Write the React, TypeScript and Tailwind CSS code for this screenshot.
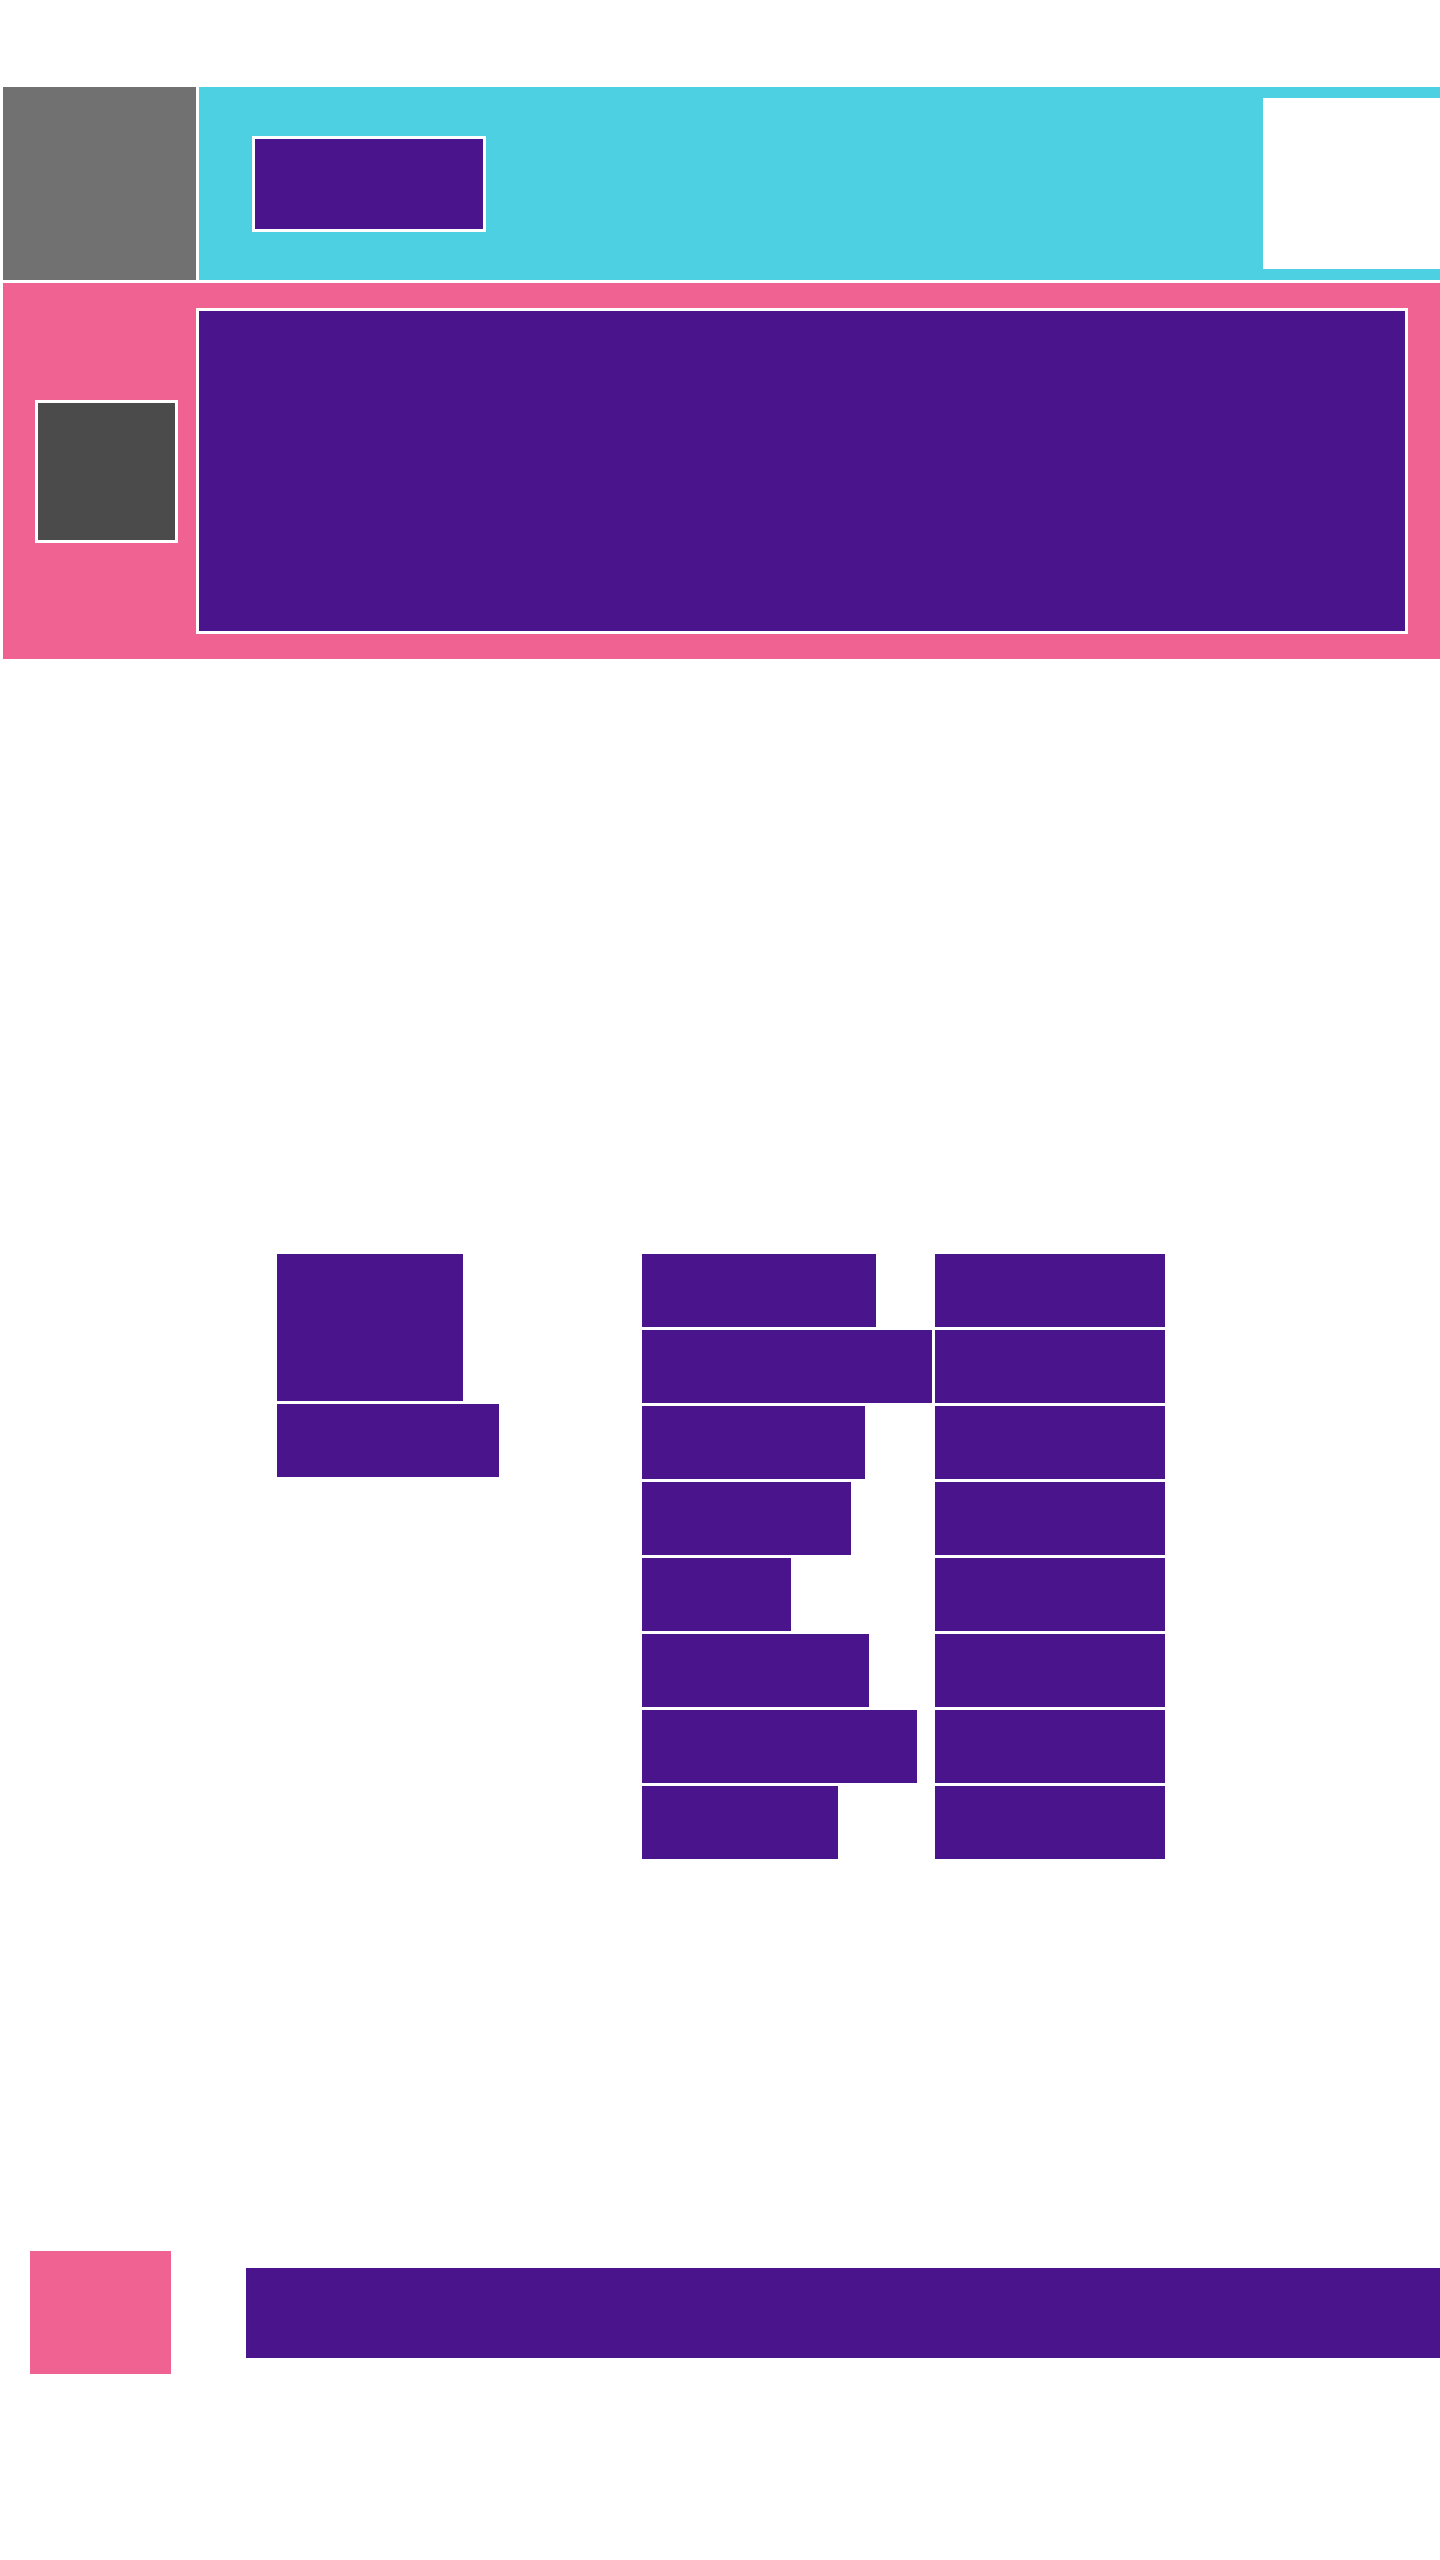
const leftBars = [234, 290, 223, 209, 149, 227, 275, 196];

function Bar({ width }: { width: number }) {
  return <div className="h-[73px] bg-[#4a148c]" style={{ width }} />;
}

export default function App() {
  return (
    <div className="min-h-[2560px] w-full bg-white">
      {/* top bands */}
      <div className="flex flex-col gap-[3px] pl-[3px] pt-[87px]">
        <div className="flex h-[193px] gap-[3px]">
          <div className="w-[193px] shrink-0 bg-[#717171]" />
          <div className="flex flex-1 items-center bg-[#4dd0e1]">
            <div className="ml-[53px] h-[96px] w-[234px] border-[3px] border-white bg-[#4a148c]" />
            <div className="flex-1" />
            <div className="h-[171px] w-[177px] bg-white" />
          </div>
        </div>

        <div className="flex h-[376px] items-center bg-[#f06292] pl-[32px] pr-[32px]">
          <div className="h-[143px] w-[143px] shrink-0 border-[3px] border-white bg-[#4b4b4b]" />
          <div className="ml-[18px] h-[326px] flex-1 border-[3px] border-white bg-[#4a148c]" />
        </div>
      </div>

      {/* list area */}
      <div className="ml-[277px] mt-[595px] flex items-start">
        <div className="flex w-[222px] flex-col gap-[3px]">
          <div className="h-[147px] w-[186px] bg-[#4a148c]" />
          <div className="h-[73px] w-[222px] bg-[#4a148c]" />
        </div>
        <div className="ml-[143px] grid grid-cols-[290px_230px] gap-[3px]">
          {leftBars.map((w, i) => (
            <div key={i} className="contents">
              <Bar width={w} />
              <div className="h-[73px] bg-[#4a148c]" />
            </div>
          ))}
        </div>
      </div>

      {/* footer row */}
      <div className="mt-[392px] flex items-center pl-[30px]">
        <div className="h-[123px] w-[141px] shrink-0 bg-[#f06292]" />
        <div className="ml-[75px] h-[90px] flex-1 bg-[#4a148c]" />
      </div>
    </div>
  );
}
